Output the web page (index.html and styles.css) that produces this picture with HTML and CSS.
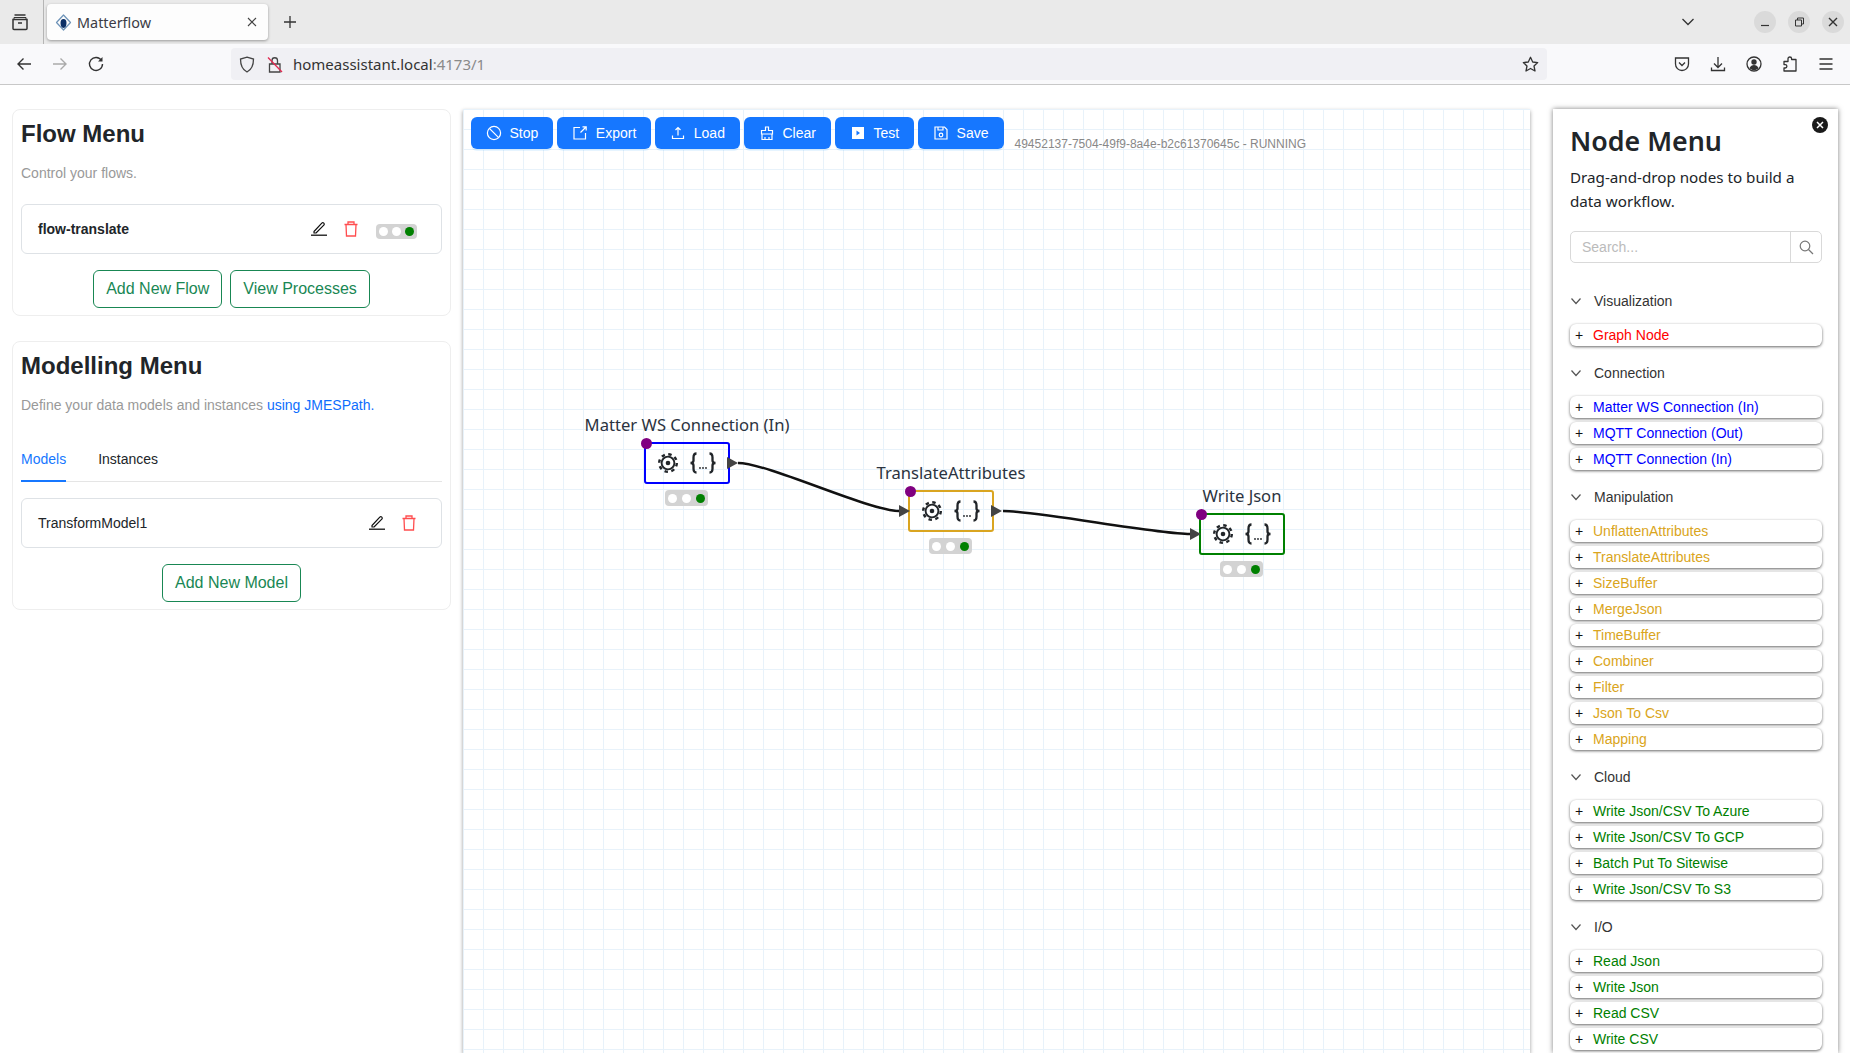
FILE: index.html
```html
<!DOCTYPE html>
<html lang="en">
<head>
  <meta charset="UTF-8">
  <title>Matterflow</title>
  <link rel="stylesheet" href="styles.css">
</head>
<body>
  <svg class="defs" width="0" height="0">
    <defs>
      <symbol id="i-pencil" viewBox="0 0 16 16">
        <path d="M3 11.5 10.8 3.2c.6-.6 1.4-.6 2 0 .6.6.6 1.4 0 2L5 13H3z" fill="none" stroke="currentColor" stroke-width="1.2" stroke-linejoin="round"/>
        <path d="M0 15.2h16" stroke="currentColor" stroke-width="1.3"/>
      </symbol>
      <symbol id="i-trash" viewBox="0 0 16 16">
        <path d="M1.5 3.5h13M5 3.5V1h6v2.5M3 3.5l.5 11.5h9l.5-11.5" fill="none" stroke="currentColor" stroke-width="1.3"/>
      </symbol>
      <symbol id="i-gear" viewBox="0 0 24 24">
        <circle cx="12" cy="12" r="6.4" fill="none" stroke="currentColor" stroke-width="1.9"/>
        <circle cx="12" cy="12" r="8.8" fill="none" stroke="currentColor" stroke-width="2.4" stroke-dasharray="3.45 3.46"/>
        <circle cx="12" cy="12" r="2.3" fill="currentColor"/>
      </symbol>
      <symbol id="i-braces" viewBox="0 0 28 24">
        <path d="M7.5 2.5C4.500 2.500 4.500 4.500 4.500 6.500v3c0 1.500-1 2.500-3 2.500 2 0 3 1 3 2.500v3c0 2 0 4 3 4M20.500 2.500c3 0 3 2 3 4v3c0 1.500 1 2.500 3 2.500-2 0-3 1-3 2.500v3c0 2 0 4-3 4" fill="none" stroke="currentColor" stroke-width="2.300"/>
        <circle cx="11" cy="17" r=".9" fill="currentColor"/>
        <circle cx="14" cy="17" r=".9" fill="currentColor"/>
        <circle cx="17" cy="17" r=".9" fill="currentColor"/>
      </symbol>
    </defs>
  </svg>

  <div class="tabstrip">
    <svg class="view-icon" width="18" height="18" viewBox="0 0 18 18" fill="none" stroke="#333" stroke-width="1.500"><path d="M2 6.500h14v9a1 1 0 0 1-1 1H3a1 1 0 0 1-1-1zM3.500 2h11M7 10h4"/><path d="M3 6V4.500h12V6" stroke-width="1"/></svg>
    <div class="tab">
      <svg class="favicon" width="17" height="17" viewBox="0 0 17 17"><path d="M8.500 1 15.500 8.500 8.500 16 1.500 8.500z" fill="none" stroke="#6d93b8" stroke-width="1.200" stroke-linejoin="round"/><path d="M8.500 5c2 0 3 1.500 3 4s-1 5-3 5-3-2.500-3-5 1-4 3-4z" fill="#0b2f66"/></svg>
      <span class="tab-title">Matterflow</span>
      <svg class="tab-close" width="12" height="12" viewBox="0 0 12 12" stroke="#444" stroke-width="1.100"><path d="M2 2l8 8M10 2l-8 8"/></svg>
    </div>
    <svg class="new-tab" width="14" height="14" viewBox="0 0 14 14" stroke="#333" stroke-width="1.300"><path d="M7 1v12M1 7h12"/></svg>
    <svg class="tab-list" width="14" height="14" viewBox="0 0 14 14" fill="none" stroke="#333" stroke-width="1.300"><path d="M1.500 4 7 9.500 12.500 4"/></svg>
    <div class="win-btns">
      <div class="win-btn"><svg width="12" height="12" viewBox="0 0 12 12" stroke="#333" stroke-width="1.200"><path d="M2 9.500h8"/></svg></div>
      <div class="win-btn"><svg width="12" height="12" viewBox="0 0 12 12" fill="none" stroke="#333" stroke-width="1"><path d="M2.500 4h6v6h-6zM4.500 4V2h6v6h-2"/></svg></div>
      <div class="win-btn"><svg width="12" height="12" viewBox="0 0 12 12" stroke="#333" stroke-width="1.400"><path d="M2 2l8 8M10 2l-8 8"/></svg></div>
    </div>
  </div>

  <div class="navbar">
    <div class="nav-left">
      <svg width="16" height="16" viewBox="0 0 16 16" fill="none" stroke="#333" stroke-width="1.400"><path d="M15 8H2M7.500 2.500 2 8l5.500 5.500"/></svg>
      <svg width="16" height="16" viewBox="0 0 16 16" fill="none" stroke="#aaa" stroke-width="1.400"><path d="M1 8h13M8.500 2.500 14 8l-5.500 5.500"/></svg>
      <svg width="16" height="16" viewBox="0 0 16 16" fill="none" stroke="#333" stroke-width="1.400"><path d="M13.500 4.500A6.500 6.500 0 1 0 14.500 8"/><path d="M14.500 1v4.500H10" fill="#333" stroke="none"/></svg>
    </div>
    <div class="urlbar">
      <svg class="url-shield" width="16" height="17" viewBox="0 0 16 17" fill="none" stroke="#444" stroke-width="1.300"><path d="M8 1.200 14.500 3c0 6-1.500 10.500-6.500 13C3 13.500 1.500 9 1.500 3z"/></svg>
      <svg class="url-lock" width="16" height="17" viewBox="0 0 16 17" fill="none"><path d="M2.500 8h10.500v8H2.500zM5 8V4.500a2.700 2.700 0 0 1 5.500 0V8" stroke="#444" stroke-width="1.300"/><path d="M1 1.500 15 16" stroke="#e22850" stroke-width="1.300"/></svg>
      <span class="url-text">homeassistant.local<span class="url-dim">:4173/1</span></span>
      <svg class="url-star" width="17" height="17" viewBox="0 0 17 17" fill="none" stroke="#333" stroke-width="1.300" stroke-linejoin="round"><path d="M8.500 1.300 10.700 6l5 .6-3.700 3.400 1 5L8.500 12.500 4 15l1-5L1.300 6.600l5-.6z"/></svg>
    </div>
    <div class="nav-right">
      <svg width="16" height="16" viewBox="0 0 16 16" fill="none" stroke="#333" stroke-width="1.300"><path d="M1.500 2h13v6a6.500 6.500 0 0 1-13 0z"/><path d="M5 6.500 8 9.500l3-3"/></svg>
      <svg width="16" height="16" viewBox="0 0 16 16" fill="none" stroke="#333" stroke-width="1.300"><path d="M8 1v10M4 7.500 8 11.500l4-4M1.500 11.500v3h13v-3"/></svg>
      <svg width="16" height="16" viewBox="0 0 16 16"><circle cx="8" cy="8" r="7" fill="none" stroke="#333" stroke-width="1.300"/><circle cx="8" cy="6" r="2.700" fill="#333"/><path d="M3.500 12c1-2 2.500-3 4.500-3s3.500 1 4.500 3c-1 1.500-2.500 2-4.500 2s-3.500-.5-4.500-2z" fill="#333"/></svg>
      <svg width="16" height="16" viewBox="0 0 16 16" fill="none" stroke="#333" stroke-width="1.300" stroke-linejoin="round"><path d="M6 3.500V2.800a1.800 1.800 0 0 1 3.600 0v.7h4.400v11.500H2v-3h1.200a1.700 1.700 0 0 0 0-3.400H2V5.500h4z"/></svg>
      <svg width="16" height="16" viewBox="0 0 16 16" stroke="#333" stroke-width="1.300"><path d="M1.500 3h13M1.500 8h13M1.500 13h13"/></svg>
    </div>
  </div>

  <div class="main">
    <div class="sidebar">
      <div class="card">
        <h2>Flow Menu</h2>
        <p class="desc">Control your flows.</p>
        <div class="item-row item-row-first">
          <span class="item-name item-bold">flow-translate</span>
          <div class="item-actions">
            <svg class="pencil"><use href="#i-pencil"/></svg>
            <svg class="trash"><use href="#i-trash"/></svg>
            <div class="lights lights-flow"><i></i><i></i><i class="on"></i></div>
          </div>
        </div>
        <div class="btn-row">
          <button class="btn-outline">Add New Flow</button>
          <button class="btn-outline">View Processes</button>
        </div>
      </div>

      <div class="card">
        <h2>Modelling Menu</h2>
        <p class="desc">Define your data models and instances <a href="#">using JMESPath.</a></p>
        <div class="tabs">
          <span class="tab-link active">Models</span>
          <span class="tab-link">Instances</span>
        </div>
        <div class="item-row">
          <span class="item-name">TransformModel1</span>
          <div class="item-actions">
            <svg class="pencil"><use href="#i-pencil"/></svg>
            <svg class="trash"><use href="#i-trash"/></svg>
          </div>
        </div>
        <div class="btn-row">
          <button class="btn-outline">Add New Model</button>
        </div>
      </div>
    </div>

    <div class="canvas">
      <div class="toolbar">
        <button class="btn-blue">
          <svg width="16" height="16" viewBox="0 0 16 16" fill="none" stroke="#fff" stroke-width="1.200"><circle cx="8" cy="8" r="6.600"/><path d="M3.400 3.400l9.200 9.200"/></svg>Stop
        </button>
        <button class="btn-blue">
          <svg width="16" height="16" viewBox="0 0 16 16" fill="none" stroke="#fff" stroke-width="1.200"><path d="M8 2.500H2v11.500h11.500V8"/><path d="M8.500 7.500 14 2M10.500 1.800H14.200V5.500"/></svg>Export
        </button>
        <button class="btn-blue">
          <svg width="16" height="16" viewBox="0 0 16 16" fill="none" stroke="#fff" stroke-width="1.200"><path d="M8 10.500V2.500M5.500 5 8 2.500 10.500 5M2.500 10.500v3h11v-3"/></svg>Load
        </button>
        <button class="btn-blue">
          <svg width="16" height="16" viewBox="0 0 16 16" fill="none" stroke="#fff" stroke-width="1.200"><path d="M6.500 5.500V2h3v3.500h4v3.500h-11V5.500zM3 9v5.500h10V9M6 14.500V12M10 14.500V12"/></svg>Clear
        </button>
        <button class="btn-blue">
          <svg width="16" height="16" viewBox="0 0 16 16"><path d="M2 2h12v12H2z" fill="#fff"/><path d="M6.500 5.500v5l3.500-2.500z" fill="#1677ff"/></svg>Test
        </button>
        <button class="btn-blue">
          <svg width="16" height="16" viewBox="0 0 16 16" fill="none" stroke="#fff" stroke-width="1.200"><path d="M2 2h9.500L14 4.500V14H2zM5 2v3h5V2"/><circle cx="8" cy="10" r="1.800"/></svg>Save
        </button>
        <span class="run-status">49452137-7504-49f9-8a4e-b2c61370645c - RUNNING</span>
      </div>

      <svg class="edges" width="1067" height="944">
        <path d="M275 354C305 354 406 402 436 402"/>
        <path d="M540 402C575 402 692 425 727 425"/>
      </svg>

      <div class="node node-conn">
        <span class="node-label">Matter WS Connection (In)</span>
        <i class="handle"></i>
        <i class="port port-out"></i>
        <svg class="gear"><use href="#i-gear"/></svg>
        <svg class="braces"><use href="#i-braces"/></svg>
        <div class="lights lights-node"><i></i><i></i><i class="on"></i></div>
      </div>
      <div class="node node-manip">
        <span class="node-label">TranslateAttributes</span>
        <i class="handle"></i>
        <i class="port port-in"></i>
        <i class="port port-out"></i>
        <svg class="gear"><use href="#i-gear"/></svg>
        <svg class="braces"><use href="#i-braces"/></svg>
        <div class="lights lights-node"><i></i><i></i><i class="on"></i></div>
      </div>
      <div class="node node-io">
        <span class="node-label">Write Json</span>
        <i class="handle"></i>
        <i class="port port-in"></i>
        <svg class="gear"><use href="#i-gear"/></svg>
        <svg class="braces"><use href="#i-braces"/></svg>
        <div class="lights lights-node"><i></i><i></i><i class="on"></i></div>
      </div>
    </div>

    <div class="node-menu">
      <div class="menu-close">
        <svg width="8" height="8" viewBox="0 0 8 8" stroke="#fff" stroke-width="1.500"><path d="M1 1l6 6M7 1l-6 6"/></svg>
      </div>
      <h2 class="menu-title">Node Menu</h2>
      <p class="menu-desc">Drag-and-drop nodes to build a data workflow.</p>
      <div class="search">
        <span class="search-input">Search...</span>
        <span class="search-btn">
          <svg width="15" height="15" viewBox="0 0 15 15" fill="none" stroke="#777" stroke-width="1.200"><circle cx="6" cy="6" r="4.800"/><path d="M9.500 9.500 14 14"/></svg>
        </span>
      </div>

      <div class="section">
        <div class="section-head"><svg width="12" height="12" viewBox="0 0 12 12" fill="none" stroke="#555" stroke-width="1.200"><path d="M1.500 3.500 6 8.500l4.500-5"/></svg>Visualization</div>
        <div class="entry c-red"><b>+</b>Graph Node</div>
      </div>
      <div class="section">
        <div class="section-head"><svg width="12" height="12" viewBox="0 0 12 12" fill="none" stroke="#555" stroke-width="1.200"><path d="M1.500 3.500 6 8.500l4.500-5"/></svg>Connection</div>
        <div class="entry c-blue"><b>+</b>Matter WS Connection (In)</div>
        <div class="entry c-blue"><b>+</b>MQTT Connection (Out)</div>
        <div class="entry c-blue"><b>+</b>MQTT Connection (In)</div>
      </div>
      <div class="section">
        <div class="section-head"><svg width="12" height="12" viewBox="0 0 12 12" fill="none" stroke="#555" stroke-width="1.200"><path d="M1.500 3.500 6 8.500l4.500-5"/></svg>Manipulation</div>
        <div class="entry c-gold"><b>+</b>UnflattenAttributes</div>
        <div class="entry c-gold"><b>+</b>TranslateAttributes</div>
        <div class="entry c-gold"><b>+</b>SizeBuffer</div>
        <div class="entry c-gold"><b>+</b>MergeJson</div>
        <div class="entry c-gold"><b>+</b>TimeBuffer</div>
        <div class="entry c-gold"><b>+</b>Combiner</div>
        <div class="entry c-gold"><b>+</b>Filter</div>
        <div class="entry c-gold"><b>+</b>Json To Csv</div>
        <div class="entry c-gold"><b>+</b>Mapping</div>
      </div>
      <div class="section">
        <div class="section-head"><svg width="12" height="12" viewBox="0 0 12 12" fill="none" stroke="#555" stroke-width="1.200"><path d="M1.500 3.500 6 8.500l4.500-5"/></svg>Cloud</div>
        <div class="entry c-green"><b>+</b>Write Json/CSV To Azure</div>
        <div class="entry c-green"><b>+</b>Write Json/CSV To GCP</div>
        <div class="entry c-green"><b>+</b>Batch Put To Sitewise</div>
        <div class="entry c-green"><b>+</b>Write Json/CSV To S3</div>
      </div>
      <div class="section">
        <div class="section-head"><svg width="12" height="12" viewBox="0 0 12 12" fill="none" stroke="#555" stroke-width="1.200"><path d="M1.500 3.500 6 8.500l4.500-5"/></svg>I/O</div>
        <div class="entry c-green"><b>+</b>Read Json</div>
        <div class="entry c-green"><b>+</b>Write Json</div>
        <div class="entry c-green"><b>+</b>Read CSV</div>
        <div class="entry c-green"><b>+</b>Write CSV</div>
      </div>
    </div>
  </div>
</body>
</html>
```

FILE: styles.css
```css
* {
  box-sizing: border-box;
}
html, body {
  margin: 0;
  height: 1053px;
  overflow: hidden;
}
body {
  font-family: "Liberation Sans", Arial, sans-serif;
  font-size: 14px;
  color: #212529;
  background: #fff;
}
.defs {
  position: absolute;
}

/* browser chrome */
.tabstrip {
  height: 44px;
  background: #eaeaea;
  display: flex;
  align-items: center;
  position: relative;
}
.view-icon {
  margin-left: 11px;
  width: 18px;
  flex: none;
}
.tab {
  width: 221px;
  height: 36px;
  margin-left: 18px;
  background: #fdfdfd;
  border-radius: 4px;
  box-shadow: 0 1px 3px rgba(0, 0, 0, 0.35);
  display: flex;
  align-items: center;
  padding: 0 10px 0 8px;
  position: relative;
}
.tab::before {
  content: "";
  position: absolute;
  left: -4px;
  top: -4px;
  height: 44px;
  border-left: 1px solid #b5b5b5;
}
.tab-title {
  font-family: "Noto Sans", sans-serif;
  font-size: 14.4px;
  color: #3b3b45;
  margin-left: 5px;
  flex: 1;
}
.new-tab {
  margin-left: 15px;
}
.tab-list {
  position: absolute;
  left: 1681px;
  top: 15px;
}
.win-btns {
  position: absolute;
  right: 6px;
  top: 11px;
  display: flex;
  gap: 12px;
}
.win-btn {
  width: 22px;
  height: 22px;
  border-radius: 50%;
  background: #dadada;
  display: flex;
  align-items: center;
  justify-content: center;
}
.navbar {
  height: 41px;
  background: #f9f9fb;
  border-bottom: 1px solid #c8c8c8;
  display: flex;
  align-items: center;
}
.nav-left {
  display: flex;
  gap: 20px;
  margin-left: 16px;
  width: 215px;
}
.urlbar {
  width: 1316px;
  height: 32px;
  background: #f0f0f4;
  border-radius: 4px;
  display: flex;
  align-items: center;
  padding: 0 8px 0 8px;
}
.url-lock {
  margin-left: 12px;
}
.url-text {
  font-family: "Noto Sans", sans-serif;
  font-size: 15px;
  color: #333;
  margin-left: 10px;
  flex: 1;
}
.url-dim {
  color: #8a8a8a;
}
.nav-right {
  display: flex;
  gap: 20px;
  margin-left: 127px;
}

/* page */
.main {
  display: flex;
  height: 968px;
  padding-top: 24px;
}
.sidebar {
  width: 463px;
  flex: none;
  padding: 0 12px;
  display: flex;
  flex-direction: column;
  gap: 25px;
}
.card {
  border: 1px solid #eee;
  border-radius: 8px;
  padding: 9px 8px 7px;
}
h2 {
  margin: 0;
  font-size: 24px;
  line-height: 29px;
  font-weight: 700;
}
.desc {
  margin: 15px 0 0;
  line-height: 21px;
  color: #999;
}
.desc a {
  color: #0d6efd;
  text-decoration: none;
}
.item-row {
  margin-top: 16px;
  height: 50px;
  border: 1px solid #dee2e6;
  border-radius: 6px;
  padding: 0 24px 0 16px;
  display: flex;
  align-items: center;
  justify-content: space-between;
}
.item-row-first {
  margin-top: 20px;
}
.item-bold {
  font-weight: 700;
}
.item-actions {
  display: flex;
  align-items: center;
  gap: 16px;
}
.pencil {
  width: 16px;
  height: 16px;
  color: #111;
  margin-top: -2px;
}
.trash {
  width: 16px;
  height: 16px;
  color: #ff4d4f;
}
.lights {
  display: flex;
  align-items: center;
  justify-content: space-between;
  background: #d3d3d3;
  border-radius: 4px;
  padding: 0 3px;
}
.lights i {
  width: 9px;
  height: 9px;
  border-radius: 50%;
  background: #fff;
}
.lights i.on {
  background: #008000;
}
.lights-flow {
  width: 41px;
  height: 15px;
  margin: 4px 0 0 1px;
}
.btn-row {
  margin-top: 16px;
  display: flex;
  justify-content: center;
  gap: 8px;
}
.btn-outline {
  height: 38px;
  padding: 0 12px;
  font: 16px "Liberation Sans", Arial, sans-serif;
  color: #198754;
  background: #fff;
  border: 1px solid #198754;
  border-radius: 6px;
}
.tabs {
  margin-top: 33px;
  display: flex;
  gap: 32px;
  border-bottom: 1px solid #e5e5e5;
}
.tab-link {
  line-height: 21px;
  padding-bottom: 10px;
  margin-bottom: -1px;
  border-bottom: 2px solid transparent;
}
.tab-link.active {
  color: #1677ff;
  border-bottom-color: #1677ff;
}

/* flow canvas */
.canvas {
  width: 1067px;
  flex: none;
  position: relative;
  background-color: #fff;
  background-image:
    linear-gradient(to right, #e8f2fa 1px, transparent 1px),
    linear-gradient(to bottom, #e8f2fa 1px, transparent 1px);
  background-size: 20px 20px;
  box-shadow: 0 2px 4px rgba(0, 0, 0, 0.4);
}
.toolbar {
  display: flex;
  align-items: flex-end;
  gap: 4px;
  padding: 8px;
}
.btn-blue {
  height: 32px;
  padding: 0 15px;
  display: flex;
  align-items: center;
  gap: 7.5px;
  font: 14px "Liberation Sans", Arial, sans-serif;
  color: #fff;
  background: #1677ff;
  border: none;
  border-radius: 6px;
  box-shadow: 0 2px 0 rgba(5, 145, 255, 0.1);
}
.run-status {
  font-size: 12px;
  color: #888;
  margin: 0 0 -5px 7px;
  line-height: 20px;
}
.edges {
  position: absolute;
  left: 0;
  top: 0;
}
.edges path {
  fill: none;
  stroke: #111;
  stroke-width: 2.4;
}
.node {
  position: absolute;
  width: 86px;
  height: 42px;
  border: 2px solid;
  border-radius: 3px;
  color: #212529;
}
.node-conn {
  left: 181px;
  top: 333px;
  border-color: #0000ff;
}
.node-manip {
  left: 445px;
  top: 381px;
  border-color: #daa520;
}
.node-io {
  left: 736px;
  top: 404px;
  border-color: #008000;
}
.node-label {
  position: absolute;
  left: 50%;
  bottom: 46px;
  transform: translateX(-50%);
  white-space: nowrap;
  font-family: "Noto Sans", sans-serif;
  font-size: 16.6px;
  line-height: 22px;
  color: #2b3340;
}
.handle {
  position: absolute;
  left: -5px;
  top: -6px;
  width: 11px;
  height: 11px;
  border-radius: 50%;
  background: #800080;
}
.port {
  position: absolute;
  top: 13px;
  width: 0;
  height: 0;
  border-top: 6px solid transparent;
  border-bottom: 6px solid transparent;
  border-left: 11px solid #444;
}
.port-out {
  left: 81px;
}
.port-in {
  left: -11px;
}
.gear {
  position: absolute;
  left: 10px;
  top: 7px;
  width: 24px;
  height: 24px;
}
.braces {
  position: absolute;
  left: 43px;
  top: 7px;
  width: 28px;
  height: 24px;
}
.lights-node {
  position: absolute;
  left: 19px;
  top: 46px;
  width: 43px;
  height: 16px;
}

/* node menu */
.node-menu {
  width: 285px;
  flex: none;
  margin-left: 23px;
  padding: 14px 16px 0 17px;
  position: relative;
  background: #fff;
  box-shadow: 0 0 5px rgba(0, 0, 0, 0.5);
}
.menu-close {
  position: absolute;
  right: 10px;
  top: 8px;
  width: 16px;
  height: 16px;
  border-radius: 50%;
  background: #1a1a1a;
  display: flex;
  align-items: center;
  justify-content: center;
}
.menu-title {
  font-family: "Noto Sans", sans-serif;
  font-size: 26.8px;
  line-height: 36px;
  font-weight: 600;
}
.menu-desc {
  font-family: "Noto Sans", sans-serif;
  font-size: 15.2px;
  line-height: 24px;
  margin: 6px 0 0;
}
.search {
  margin-top: 18px;
  height: 32px;
  border: 1px solid #d9d9d9;
  border-radius: 5px;
  display: flex;
  margin-bottom: 26px;
}
.search-input {
  flex: 1;
  padding-left: 11px;
  line-height: 30px;
  color: #bbb;
}
.search-btn {
  width: 31px;
  border-left: 1px solid #d9d9d9;
  display: flex;
  align-items: center;
  justify-content: center;
}
.section {
  margin-bottom: 15px;
}
.section-head {
  height: 24px;
  margin-bottom: 11px;
  display: flex;
  align-items: center;
  gap: 12px;
  color: #333;
}
.section-head svg {
  flex: none;
}
.entry {
  height: 22px;
  margin-bottom: 4px;
  line-height: 22px;
  border-radius: 6px;
  background: #fff;
  box-shadow: 0 1px 3px rgba(0, 0, 0, 0.6);
  display: flex;
}
.entry:last-child {
  margin-bottom: 0;
}
.entry b {
  width: 23px;
  padding-left: 5px;
  font-weight: 400;
  color: #111;
}
.c-red {
  color: #ff0000;
}
.c-blue {
  color: #0000ff;
}
.c-gold {
  color: #daa520;
}
.c-green {
  color: #008000;
}
```
